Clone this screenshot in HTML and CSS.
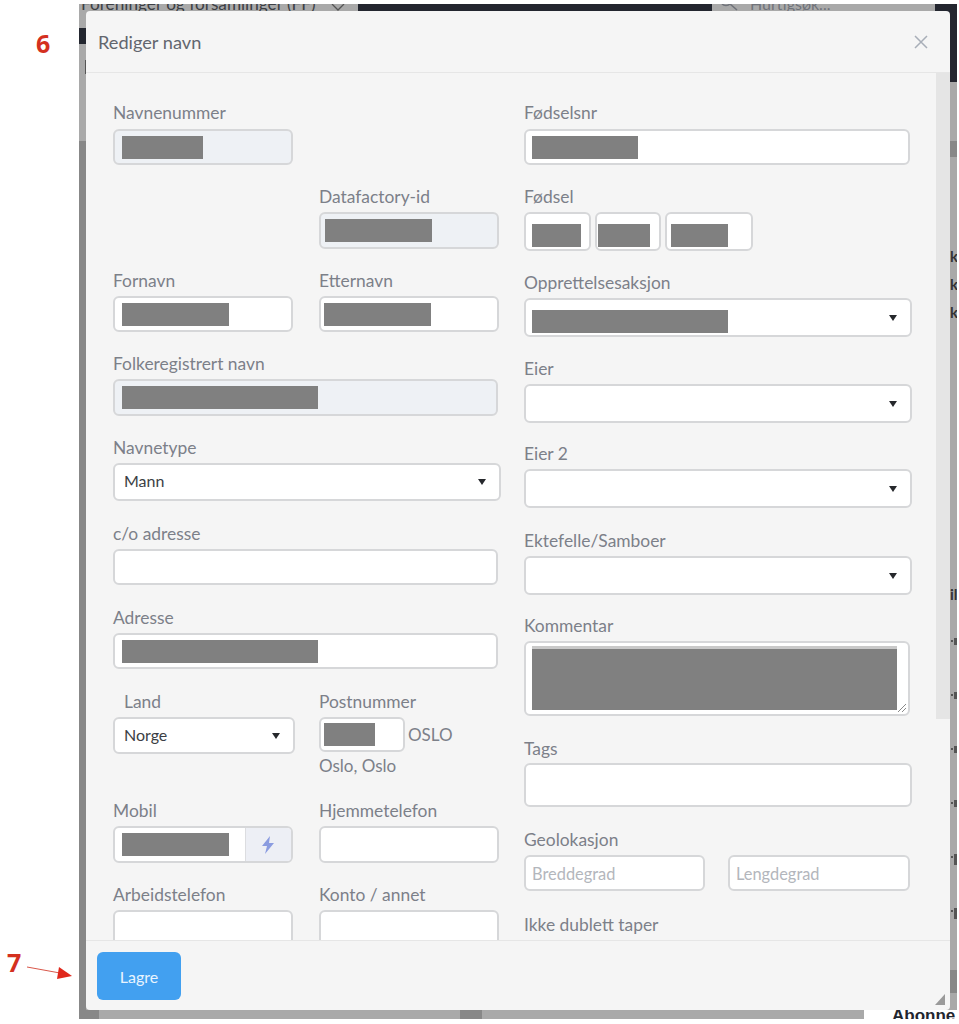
FILE: index.html
```html
<!DOCTYPE html>
<html lang="no">
<head>
<meta charset="utf-8">
<title>Rediger navn</title>
<link rel="stylesheet" href="styles.css">
</head>
<body>
<div class="page">
  <div class="note note-6">6</div>
  <div class="note note-7">7</div>
  <svg class="arrow" width="50" height="20" viewBox="0 0 50 20"><line x1="0" y1="1" x2="33" y2="7" stroke="#d9574a" stroke-width="1"/><polygon points="45,10 32,1 30,13" fill="#e0281c"/></svg>

  <div class="backdrop">
    <div class="bg-title">Foreninger og forsamlinger (FF)</div>
    <svg class="bg-chevron" width="14" height="8" viewBox="0 0 14 8"><path d="M1 0 L7 6 L13 0" fill="none" stroke="#555" stroke-width="1.3"/></svg>
    <div class="bg-navbar"></div>
    <svg class="bg-search-icon" width="18" height="7" viewBox="0 0 18 7"><path d="M1 0 C3 2 7 2 9 0 M9 0 L16 6" fill="none" stroke="#70737a" stroke-width="1.6"/></svg>
    <div class="bg-search">Hurtigsøk...</div>
    <div class="bg-corner"></div>
    <div class="bg-left-dark"></div>
    <div class="bg-left-tick"></div>
    <div class="bg-left-low"></div>
    <div class="bg-right-block one"></div>
    <div class="bg-right-block two"></div>
    <div class="bg-right-text k1">k</div>
    <div class="bg-right-text k2">k</div>
    <div class="bg-right-text k3">k</div>
    <div class="bg-right-text il">il</div>
    <div class="bg-dot d1"></div><div class="bg-dot d2"></div><div class="bg-dot d3"></div>
    <div class="bg-dot d4"></div><div class="bg-dot d5"></div><div class="bg-dot d6"></div>
    <div class="bg-bottom-block one"></div>
    <div class="bg-bottom-block two"></div>
    <div class="bg-bottom-white"><span>Abonne</span></div>
  </div>

  <section class="modal">
    <header class="modal-head">
      <h1 class="modal-title">Rediger navn</h1>
      <svg class="close" width="14" height="14" viewBox="0 0 14 14"><path d="M1 1 L13 13 M13 1 L1 13" stroke="#a8aeb8" stroke-width="1.5" fill="none"/></svg>
    </header>

    <div class="modal-body">
      <div class="scrolltrack"></div>
      <div class="form">
        <div class="col">
          <div class="pair">
            <div class="field first"><label>Navnenummer</label><div class="ctl h36 off"><span class="r w81"></span></div></div>
          </div>
          <div class="pair">
            <div class="field second"><label>Datafactory-id</label><div class="ctl h37 off"><span class="r m6 w107"></span></div></div>
          </div>
          <div class="pair">
            <div class="field"><label>Fornavn</label><div class="ctl h36"><span class="r w107"></span></div></div>
            <div class="field"><label>Etternavn</label><div class="ctl h36"><span class="r m5 w107"></span></div></div>
          </div>
          <div class="field w385"><label>Folkeregistrert navn</label><div class="ctl h37 off"><span class="r w196"></span></div></div>
          <div class="field"><label>Navnetype</label><div class="ctl h38 sel"><span class="val">Mann</span></div></div>
          <div class="field w385 loose"><label>c/o adresse</label><div class="ctl h36"></div></div>
          <div class="field w385 loose"><label>Adresse</label><div class="ctl h36"><span class="r w196"></span></div></div>
          <div class="pair loose">
            <div class="field land"><label class="indent">Land</label><div class="ctl h37 sel"><span class="val">Norge</span></div></div>
            <div class="field">
              <label>Postnummer</label>
              <div class="post">
                <div class="ctl h35 postbox"><span class="r m5 w51"></span></div>
                <span class="post-city">OSLO</span>
              </div>
              <div class="post-sub">Oslo, Oslo</div>
            </div>
          </div>
          <div class="pair">
            <div class="field"><label>Mobil</label>
              <div class="ctl h37 group"><span class="r w107"></span>
                <span class="addon"><svg width="14" height="18" viewBox="0 0 14 18"><path d="M9 0 L1 10 L6 10 L4 18 L13 7 L8 7 Z" fill="#8b9ce0"/></svg></span>
              </div>
            </div>
            <div class="field"><label>Hjemmetelefon</label><div class="ctl h37"></div></div>
          </div>
          <div class="pair">
            <div class="field"><label>Arbeidstelefon</label><div class="ctl h36"></div></div>
            <div class="field"><label>Konto / annet</label><div class="ctl h36"></div></div>
          </div>
        </div>

        <div class="col">
          <div class="field first w386"><label>Fødselsnr</label><div class="ctl h36"><span class="r rr w106"></span></div></div>
          <div class="field"><label>Fødsel</label>
            <div class="birth">
              <div class="ctl h39 low b1"><span class="r rr w49"></span></div>
              <div class="ctl h39 low b2"><span class="r m3 w52"></span></div>
              <div class="ctl h39 low b3"><span class="r m6 w57"></span></div>
            </div>
          </div>
          <div class="field"><label>Opprettelsesaksjon</label><div class="ctl h39 sel low"><span class="r rr w196"></span></div></div>
          <div class="field"><label>Eier</label><div class="ctl h39 sel"></div></div>
          <div class="field tight"><label>Eier 2</label><div class="ctl h39 sel"></div></div>
          <div class="field loose"><label>Ektefelle/Samboer</label><div class="ctl h39 sel"></div></div>
          <div class="field tight w386"><label>Kommentar</label>
            <div class="ctl h75 area"><span class="r rr w365 h61"></span>
              <svg class="grip" width="10" height="10" viewBox="0 0 10 10"><path d="M1 9 L9 1 M5 9 L9 5" stroke="#8a8a8a" stroke-width="1"/></svg>
            </div>
          </div>
          <div class="field"><label class="nudge">Tags</label><div class="ctl h44"></div></div>
          <div class="field loose"><label>Geolokasjon</label>
            <div class="geo">
              <input class="ctl h36 geo-in" placeholder="Breddegrad">
              <input class="ctl h36 geo-in" placeholder="Lengdegrad">
            </div>
          </div>
          <div class="field loose2"><label>Ikke dublett taper</label></div>
        </div>
      </div>
    </div>

    <footer class="modal-foot">
      <button class="save" type="button">Lagre</button>
      <span class="resize"></span>
    </footer>
  </section>
</div>
</body>
</html>
```
FILE: styles.css
```css
* { box-sizing: border-box; }
html, body { margin: 0; padding: 0; background: #fff; }
body { font-family: Lato, "Open Sans", sans-serif; }
.page { position: relative; width: 959px; height: 1024px; overflow: hidden; }

/* annotations */
.note { position: absolute; font-family: "Open Sans", sans-serif; font-weight: 700; font-size: 25px; line-height: 26px; color: #d4301f; }
.note-6 { left: 36px; top: 30px; }
.note-7 { left: 7px; top: 949px; }
.arrow { position: absolute; left: 27px; top: 966px; }

/* dimmed page behind the modal */
.backdrop { position: absolute; left: 79px; top: 4px; width: 878px; height: 1015px; background: #a9a9a9; overflow: hidden; }
.backdrop > * { position: absolute; }
.bg-title { left: 2px; top: -10px; font-size: 17.2px; line-height: 20px; color: #3c3f44; white-space: nowrap; }
.bg-chevron { left: 252px; top: 0; }
.bg-navbar { left: 279px; top: 0; width: 354px; height: 7px; background: #23262f; }
.bg-search-icon { left: 642px; top: 0; }
.bg-search { left: 671px; top: -10px; font-size: 16px; line-height: 20px; color: #70737a; white-space: nowrap; }
.bg-corner { left: 856px; top: 0; width: 22px; height: 78px; background: #23262f; }
.bg-left-dark { left: 0; top: 24px; width: 7px; height: 16px; background: #23262f; }
.bg-left-tick { left: 6px; top: 56px; width: 1px; height: 14px; background: #555; }
.bg-left-low { left: 0; top: 137px; width: 7px; height: 878px; background: #888; }
.bg-right-block { left: 871px; width: 7px; background: #888; }
.bg-right-block.one { top: 137px; height: 16px; }
.bg-right-block.two { top: 966px; height: 23px; }
.bg-right-text { left: 871px; font-size: 15px; line-height: 18px; font-weight: 700; color: #333; }
.bg-right-text.k1 { top: 243px; }
.bg-right-text.k2 { top: 271px; }
.bg-right-text.k3 { top: 299px; }
.bg-right-text.il { top: 581px; }
.bg-dot { left: 875px; width: 3px; height: 7px; background: #555; }
.bg-dot::before { content: ""; position: absolute; left: -3px; top: 2px; width: 2px; height: 2px; background: #555; }
.bg-dot.d1 { top: 634px; }
.bg-dot.d2 { top: 688px; }
.bg-dot.d3 { top: 742px; }
.bg-dot.d4 { top: 796px; }
.bg-dot.d5 { top: 850px; height: 11px; }
.bg-dot.d6 { top: 904px; height: 11px; }
.bg-bottom-block { top: 1006px; height: 9px; background: #888; }
.bg-bottom-block.one { left: 0; width: 20px; }
.bg-bottom-block.two { left: 381px; width: 22px; }
.bg-bottom-white { left: 785px; top: 1006px; width: 93px; height: 9px; background: #fff; overflow: hidden; }
.bg-bottom-white span { position: absolute; left: 28px; top: -3px; font-family: "Liberation Sans", sans-serif; font-weight: 700; font-size: 17px; line-height: 18px; color: #23262f; }

/* modal */
.modal { position: absolute; left: 86px; top: 11px; width: 864px; height: 999px; background: #f5f5f5; border-radius: 4px; display: flex; flex-direction: column; overflow: hidden; }
.modal-head { height: 62px; flex: none; border-bottom: 1px solid #e6e6e6; display: flex; align-items: center; justify-content: space-between; padding: 0 22px 0 12px; }
.modal-title { margin: 0; font-weight: 400; font-size: 18.2px; color: #62666e; }
.modal-body { flex: 1; min-height: 0; position: relative; overflow: hidden; padding: 30px 0 0 27px; }
.scrolltrack { position: absolute; right: 0; top: 0; width: 14px; height: 646px; background: #e5e5e5; }
.modal-foot { height: 70px; flex: none; border-top: 1px solid #e6e6e6; padding: 11px; position: relative; }
.save { display: block; width: 84px; height: 48px; border: 0; border-radius: 6px; background: #42a0f0; color: #e8f4fe; font-family: Lato, sans-serif; font-size: 16px; }
.resize { position: absolute; right: 5px; bottom: 5px; width: 0; height: 0; border-left: 10px solid transparent; border-bottom: 11px solid #9a9a9a; }

/* form */
.form { display: grid; grid-template-columns: 388px 388px; column-gap: 23px; }
.col { display: flex; flex-direction: column; gap: 21px; }
.field label { display: block; height: 22px; margin-bottom: 4px; font-size: 17.4px; line-height: 22px; color: #7c8089; white-space: nowrap; }
.field.first label { height: 20px; line-height: 20px; margin-bottom: 6px; }
.field label.indent { padding-left: 11px; }
.field label.nudge { height: 24px; line-height: 24px; margin-bottom: 2px; }
.loose { margin-top: 1px; }
.loose2 { margin-top: 2px; }
.tight { margin-top: -1px; }
.pair { display: grid; grid-template-columns: 180px 180px; column-gap: 26px; }
.second { grid-column: 2; }
.w385 { width: 385px; }
.w386 { width: 386px; }
.land { width: 182px; }

.ctl { display: flex; align-items: center; width: 100%; background: #fff; border: 2px solid #d6d7d9; border-radius: 6px; position: relative; }
.off { background: #eef1f5; }
.h35 { height: 35px; } .h36 { height: 36px; } .h37 { height: 37px; } .h38 { height: 38px; }
.h39 { height: 39px; } .h44 { height: 44px; } .h75 { height: 75px; }
.sel { padding-right: 26px; }
.sel::after { content: ""; position: absolute; right: 13px; top: 50%; margin-top: -3px; border-left: 4px solid transparent; border-right: 4px solid transparent; border-top: 6px solid #26282c; }
.val { margin: 0 0 3px 9px; font-size: 16px; color: #3b3e44; }
.low { padding-top: 8px; }

/* redacted values */
.r { display: block; flex: none; height: 23px; margin-left: 7px; background: #808080; }
.rr { margin-left: 6px; }
.m3 { margin-left: 1px; } .m5 { margin-left: 3px; } .m6 { margin-left: 4px; }
.w49 { width: 49px; } .w51 { width: 51px; } .w52 { width: 52px; } .w57 { width: 57px; } .w81 { width: 81px; }
.w106 { width: 106px; } .w107 { width: 107px; } .w196 { width: 196px; } .w365 { width: 365px; }
.h61 { height: 61px; }

.post { display: flex; align-items: center; gap: 3px; }
.postbox { width: 86px; }
.post-city { font-size: 17px; color: #7c8089; }
.post-sub { margin: 4px 0 3px; font-size: 17px; line-height: 20px; color: #7c8089; }

.group { overflow: hidden; }
.addon { position: absolute; right: 0; top: 0; bottom: 0; width: 46px; padding-right: 2px; background: #edeff5; border-left: 1px solid #dcdde0; display: flex; align-items: center; justify-content: center; }

.birth { display: flex; gap: 4px; }
.b1 { width: 67px; } .b2 { width: 66px; } .b3 { width: 88px; }

.area { align-items: flex-start; padding-top: 6px; }
.area::before { content: ""; position: absolute; left: 6px; top: 3px; width: 365px; height: 3px; background: #c9c9c9; }
.grip { position: absolute; right: 1px; bottom: 1px; }

.geo { display: grid; grid-template-columns: 181px 182px; column-gap: 23px; }
.geo-in { padding: 0 6px; font-family: Lato, sans-serif; font-size: 16.4px; color: #3b3e44; outline: 0; }
.geo-in::placeholder { color: #b3b6bc; opacity: 1; }
```
